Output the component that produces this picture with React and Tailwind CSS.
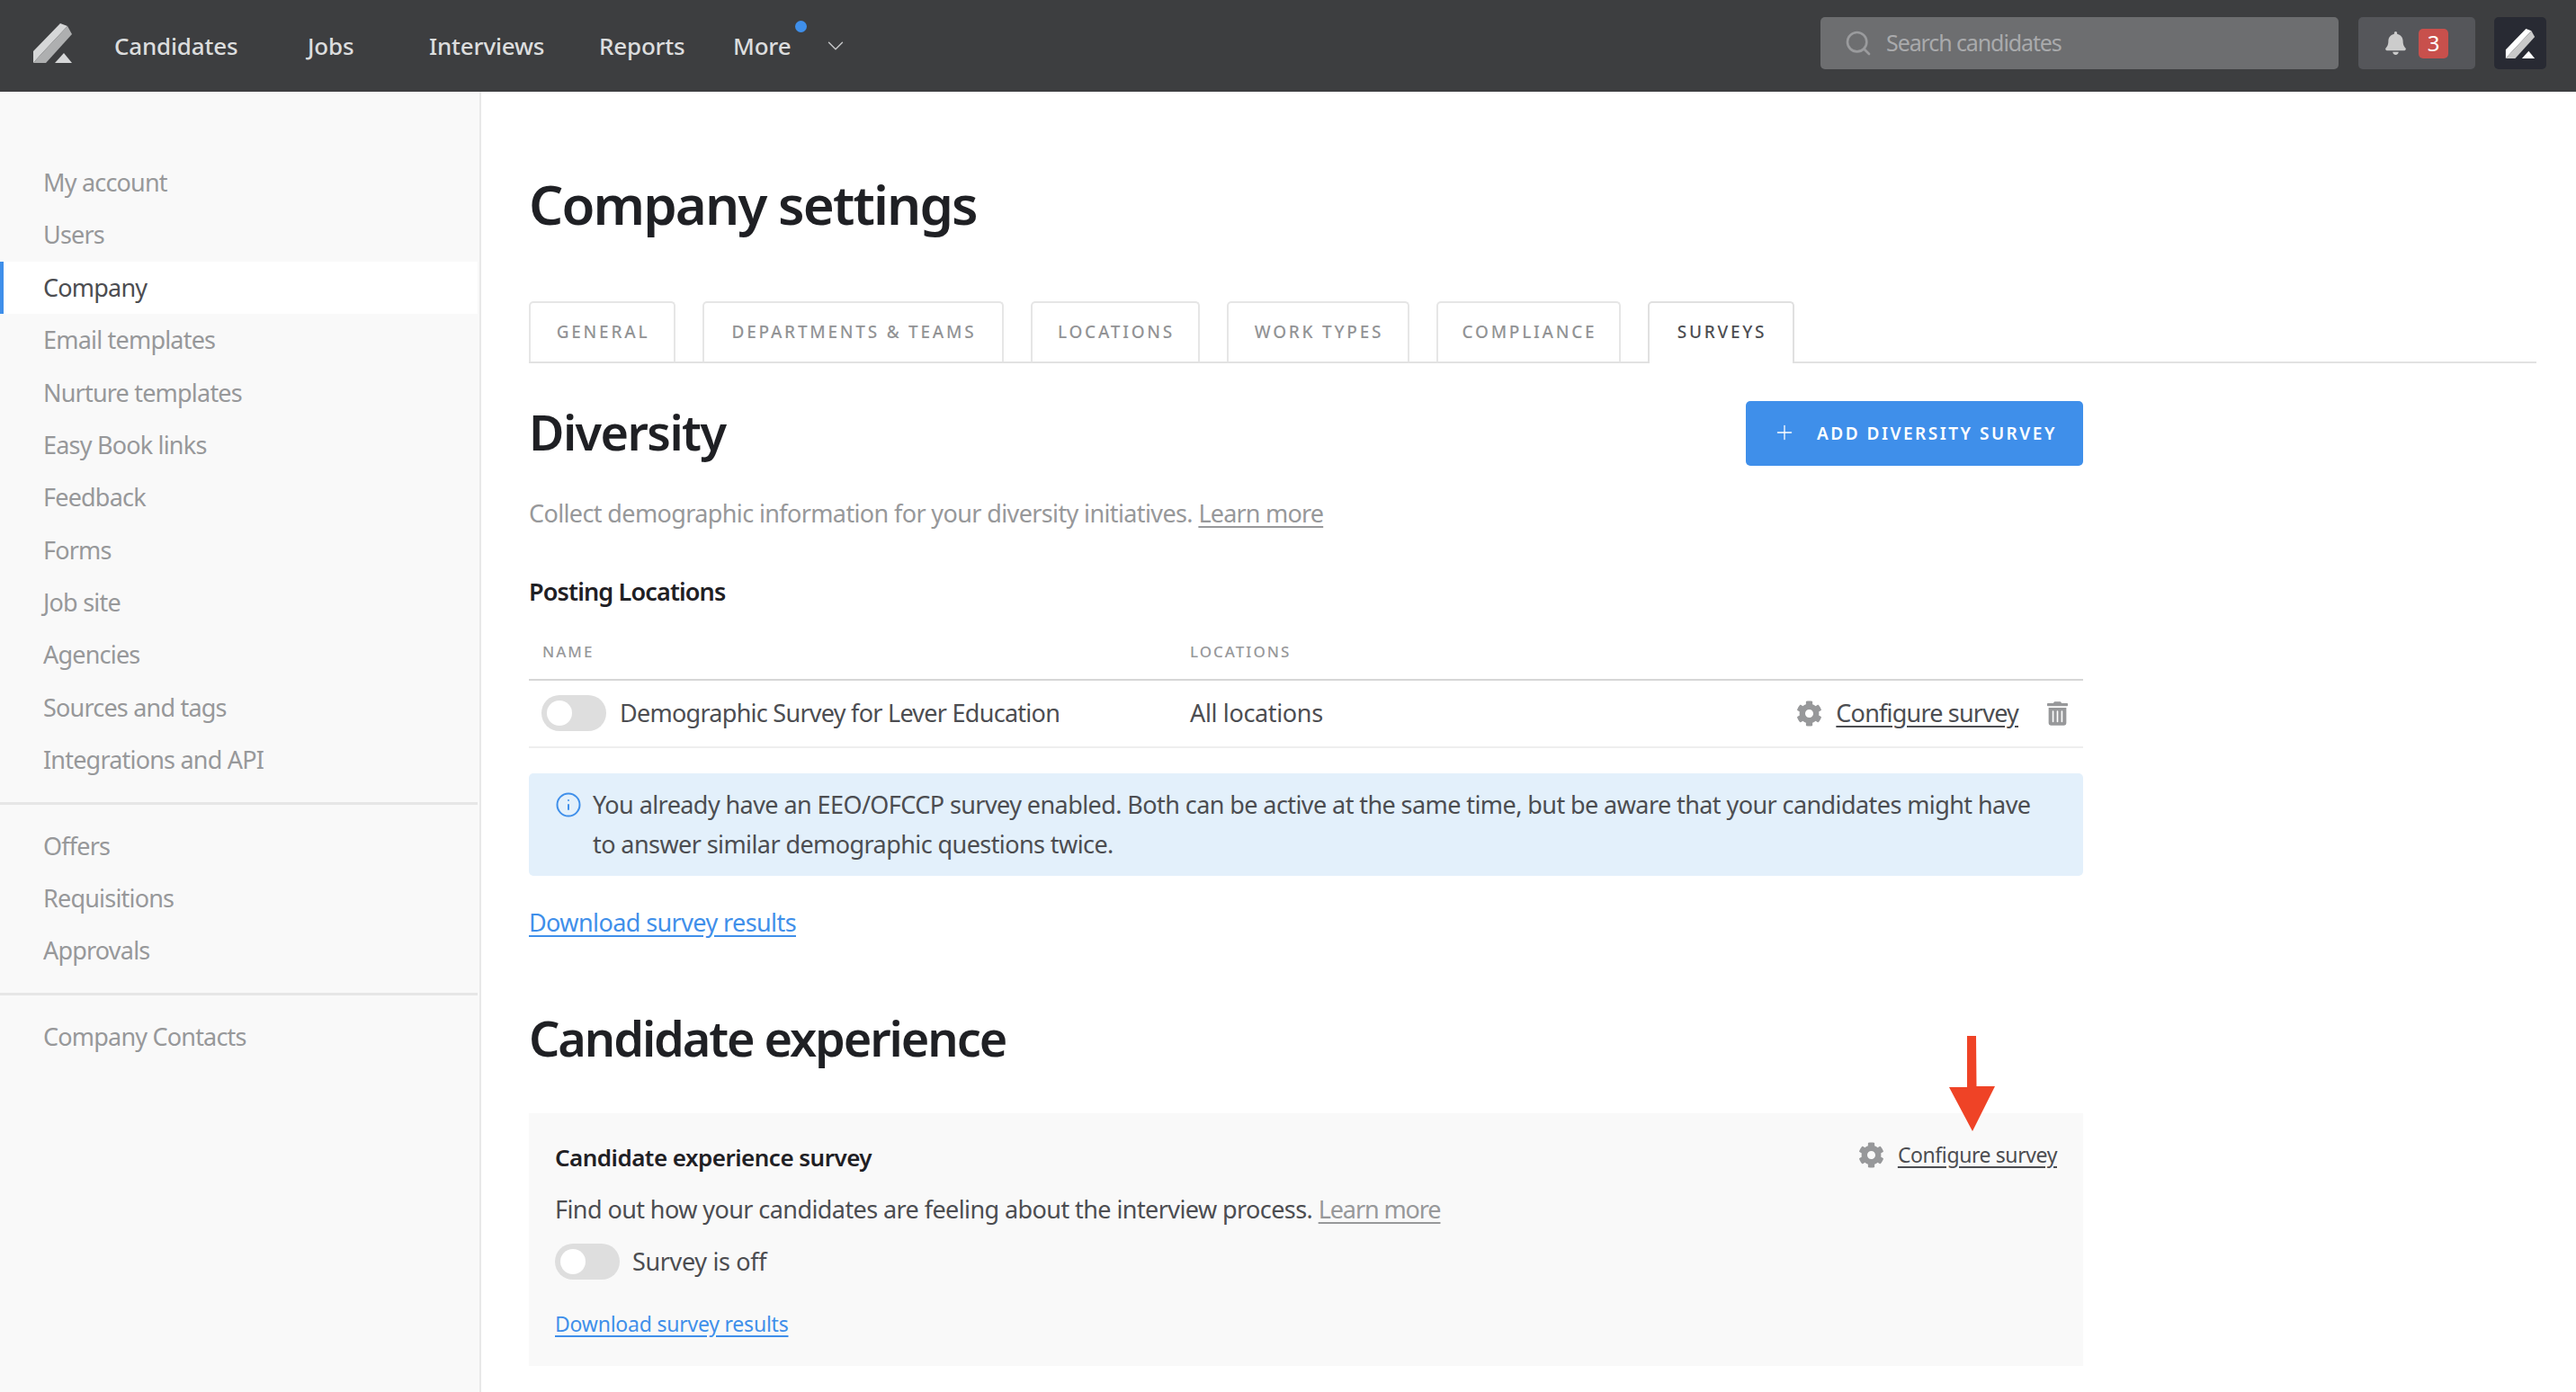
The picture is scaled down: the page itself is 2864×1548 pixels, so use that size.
import React from "react";
import { FaCog, FaTrashAlt, FaBell } from "react-icons/fa";
import { Search, Info, Plus, ChevronDown } from "lucide-react";

function Logo({ a, b, className }) {
  return (
    <svg viewBox="0 0 43 44" className={className}>
      <polygon points="0,31 30,0 38,3 8,35 0,44" fill={a} />
      <polygon points="0,44 8,35 38,3 43,12 14,44" fill={b} />
      <polygon points="24,44 34,33 43,44" fill={a} />
    </svg>
  );
}

function Toggle() {
  return (
    <div className="w-[72px] h-[40px] rounded-[20px] bg-[#dedede] flex items-center pl-[6px] shrink-0">
      <div className="w-[28px] h-[28px] rounded-full bg-white" />
    </div>
  );
}

const NavItem = ({ label, className }) => (
  <span className={`text-[26px] font-medium text-[#dcddde] tracking-[-0.2px] ${className}`}>{label}</span>
);

const SideItem = ({ label, active }) => (
  <div
    className={
      active
        ? "h-[58.4px] flex items-center pl-[44px] border-l-4 border-[#3f8fea] bg-white text-[#4c4d51] text-[27px] tracking-[-0.8px] mr-[2px]"
        : "h-[58.4px] flex items-center pl-[48px] text-[#97989a] text-[27px] tracking-[-0.8px]"
    }
  >
    {label}
  </div>
);

const tabs = [
  ["GENERAL", "w-[163px]"],
  ["DEPARTMENTS & TEAMS", "w-[335px]"],
  ["LOCATIONS", "w-[188px]"],
  ["WORK TYPES", "w-[203px]"],
  ["COMPLIANCE", "w-[205px]"],
];

export default function App() {
  return (
    <div className="relative w-[2864px] h-[1548px] overflow-hidden bg-white font-['Noto_Sans',sans-serif] text-[#4c4d51]">
      <header className="h-[102px] bg-[#3d3e40] flex items-center">
        <Logo a="#d6d7d8" b="#aeafb0" className="w-[43px] h-[44px] ml-[37px] mb-[6px]" />
        <NavItem label="Candidates" className="ml-[47px] w-[215px]" />
        <NavItem label="Jobs" className="w-[135px]" />
        <NavItem label="Interviews" className="w-[189px]" />
        <NavItem label="Reports" className="w-[149px]" />
        <div className="relative flex items-center">
          <NavItem label="More" />
          <span className="absolute left-[69px] top-[-9px] w-[13px] h-[13px] rounded-full bg-[#3f8fea]" />
        </div>
        <ChevronDown strokeWidth={1.1} className="w-[30px] h-[30px] text-[#c8c9ca] ml-[35px]" />
        <div className="ml-auto mb-[6px] w-[576px] h-[58px] rounded-[5px] bg-[#6d6e70] flex items-center pl-[26px]">
          <Search strokeWidth={2} className="w-[32px] h-[32px] text-[#9a9b9d]" />
          <span className="ml-[15px] text-[25px] text-[#a9aaac] tracking-[-1.1px]">Search candidates</span>
        </div>
        <div className="ml-[22px] mb-[6px] w-[130px] h-[58px] rounded-[5px] bg-[#55565a] flex items-center pl-[29px]">
          <FaBell className="w-[25px] h-[26px] text-[#cccccc]" />
          <span className="ml-[13px] w-[33px] h-[33px] rounded-[5px] bg-[#c8504c] text-white text-[24px] flex items-center justify-center">3</span>
        </div>
        <div className="ml-[21px] mr-[33px] mb-[6px] w-[58px] h-[58px] rounded-[5px] bg-[#282a33] flex items-center justify-center">
          <Logo a="#ffffff" b="#c9c9c9" className="w-[34px] h-[33px]" />
        </div>
      </header>

      <div className="flex h-[1446px]">
        <aside className="w-[535px] shrink-0 bg-[#f9f9f9] border-r-2 border-[#e8e8e8] pt-[72px]">
          {["My account", "Users"].map((l) => <SideItem key={l} label={l} />)}
          <SideItem label="Company" active />
          {["Email templates", "Nurture templates", "Easy Book links", "Feedback", "Forms", "Job site", "Agencies", "Sources and tags", "Integrations and API"].map((l) => (
            <SideItem key={l} label={l} />
          ))}
          <div className="h-[3px] bg-[#e6e6e6] mt-[17px] mb-[17px] mr-[2px]" />
          {["Offers", "Requisitions", "Approvals"].map((l) => <SideItem key={l} label={l} />)}
          <div className="h-[3px] bg-[#e6e6e6] mt-[17px] mb-[17px] mr-[2px]" />
          <SideItem label="Company Contacts" />
        </aside>

        <main className="flex-1 pl-[53px]">
          <h1 className="mt-[96px] h-[60px] pb-[3px] flex items-center text-[60px] font-semibold text-[#1f2024] tracking-[-1.9px]">Company settings</h1>

          <div className="mt-[77px] w-[2232px] h-[69px] flex gap-[30px] border-b-2 border-[#e2e2e2]">
            {tabs.map(([t, w]) => (
              <div key={t} className={`${w} h-[67px] pl-[2px] border-2 border-b-0 border-[#e6e6e6] rounded-t-[5px] flex items-center justify-center text-[19px] font-medium tracking-[2.75px] text-[#929395]`}>
                {t}
              </div>
            ))}
            <div className="w-[163px] h-[69px] pl-[2px] pb-[2px] border-2 border-b-0 border-[#e0e0e0] rounded-t-[5px] bg-white flex items-center justify-center text-[19px] font-medium tracking-[2.75px] text-[#4c4d51] relative z-10">
              SURVEYS
            </div>
          </div>

          <div className="w-[1728px]">
            <div className="mt-[42px] h-[72px] flex items-center justify-between">
              <h2 className="pb-[3px] text-[54px] font-semibold text-[#1f2024] tracking-[-1.6px]">Diversity</h2>
              <button className="w-[375px] h-[72px] rounded-[5px] bg-[#3f8fea] text-white flex items-center pl-[30px]">
                <Plus strokeWidth={1.2} className="w-[26px] h-[26px] mb-[2px]" />
                <span className="ml-[23px] text-[19px] font-semibold tracking-[2.5px]">ADD DIVERSITY SURVEY</span>
              </button>
            </div>

            <p className="mt-[32px] h-[44px] pb-[1px] flex items-center text-[27px] text-[#97989a] tracking-[-0.62px] whitespace-pre">
              Collect demographic information for your diversity initiatives. <a className="underline underline-offset-4 tracking-[-0.8px]">Learn more</a>
            </p>

            <h3 className="mt-[42px] h-[44px] flex items-center text-[27px] font-semibold text-[#1f2024] tracking-[-0.85px]">Posting Locations</h3>

            <div className="h-[77px] border-b-2 border-[#d6d6d6] flex items-end pb-[18px] text-[17px] font-medium tracking-[2px] text-[#97989a]">
              <span className="ml-[15px] w-[720px]">NAME</span>
              <span>LOCATIONS</span>
            </div>

            <div className="h-[75px] pb-[1px] border-b-2 border-[#eeeeee] flex items-center text-[27px]">
              <div className="ml-[14px]"><Toggle /></div>
              <span className="ml-[15px] w-[634px] tracking-[-0.73px]">Demographic Survey for Lever Education</span>
              <span className="tracking-[-0.35px]">All locations</span>
              <div className="ml-auto flex items-center">
                <FaCog className="w-[29px] h-[29px] text-[#97989a]" />
                <a className="ml-[15px] underline underline-offset-4 tracking-[-0.8px]">Configure survey</a>
                <FaTrashAlt className="ml-[32px] mr-[17px] w-[23px] h-[29px] text-[#97989a]" />
              </div>
            </div>

            <div className="mt-[28px] h-[114px] rounded-[5px] bg-[#e3f0fb] flex pl-[29px] pr-[40px] py-[13px] text-[27px] leading-[44px] tracking-[-0.58px]">
              <Info strokeWidth={1.6} className="w-[30px] h-[30px] text-[#3f8fea] mt-[7px] shrink-0" />
              <p className="ml-[12px]">You already have an EEO/OFCCP survey enabled. Both can be active at the same time, but be aware that your candidates might have to answer similar demographic questions twice.</p>
            </div>

            <a className="mt-[30px] h-[44px] flex items-center text-[27px] text-[#3f8fea] underline underline-offset-4 tracking-[-0.59px]">Download survey results</a>

            <h2 className="mt-[78px] h-[60px] pb-[3px] flex items-center text-[54px] font-semibold text-[#1f2024] tracking-[-2.1px]">Candidate experience</h2>

            <section className="mt-[52px] h-[281px] bg-[#f9f9f9] pl-[29px] pr-[29px] pt-[27px]">
              <div className="h-[44px] flex items-center justify-between">
                <h4 className="text-[26px] font-semibold text-[#1f2024] tracking-[-0.52px]">Candidate experience survey</h4>
                <div className="flex items-center mb-[6px]">
                  <FaCog className="w-[29px] h-[29px] text-[#97989a]" />
                  <a className="ml-[15px] text-[23px] underline underline-offset-4 tracking-[-0.4px]">Configure survey</a>
                </div>
              </div>
              <p className="mt-[15px] h-[44px] pb-[1px] flex items-center text-[27px] tracking-[-0.58px] whitespace-pre">
                Find out how your candidates are feeling about the interview process. <a className="text-[#97989a] underline underline-offset-4 tracking-[-1.1px]">Learn more</a>
              </p>
              <div className="mt-[15px] flex items-center text-[27px] tracking-[-0.35px]">
                <Toggle />
                <span className="ml-[14px]">Survey is off</span>
              </div>
              <a className="mt-[27px] h-[44px] pb-[1px] flex items-center text-[23px] text-[#3f8fea] underline underline-offset-4 tracking-[-0.22px]">Download survey results</a>
            </section>
          </div>
        </main>
      </div>

      <svg viewBox="0 0 52 107" className="absolute left-[2167px] top-[1152px] w-[52px] h-[107px]">
        <polygon points="20,0 30,0 30.5,56 51,56 26,106 0,57 20,57" fill="#ef4326" />
      </svg>
    </div>
  );
}
